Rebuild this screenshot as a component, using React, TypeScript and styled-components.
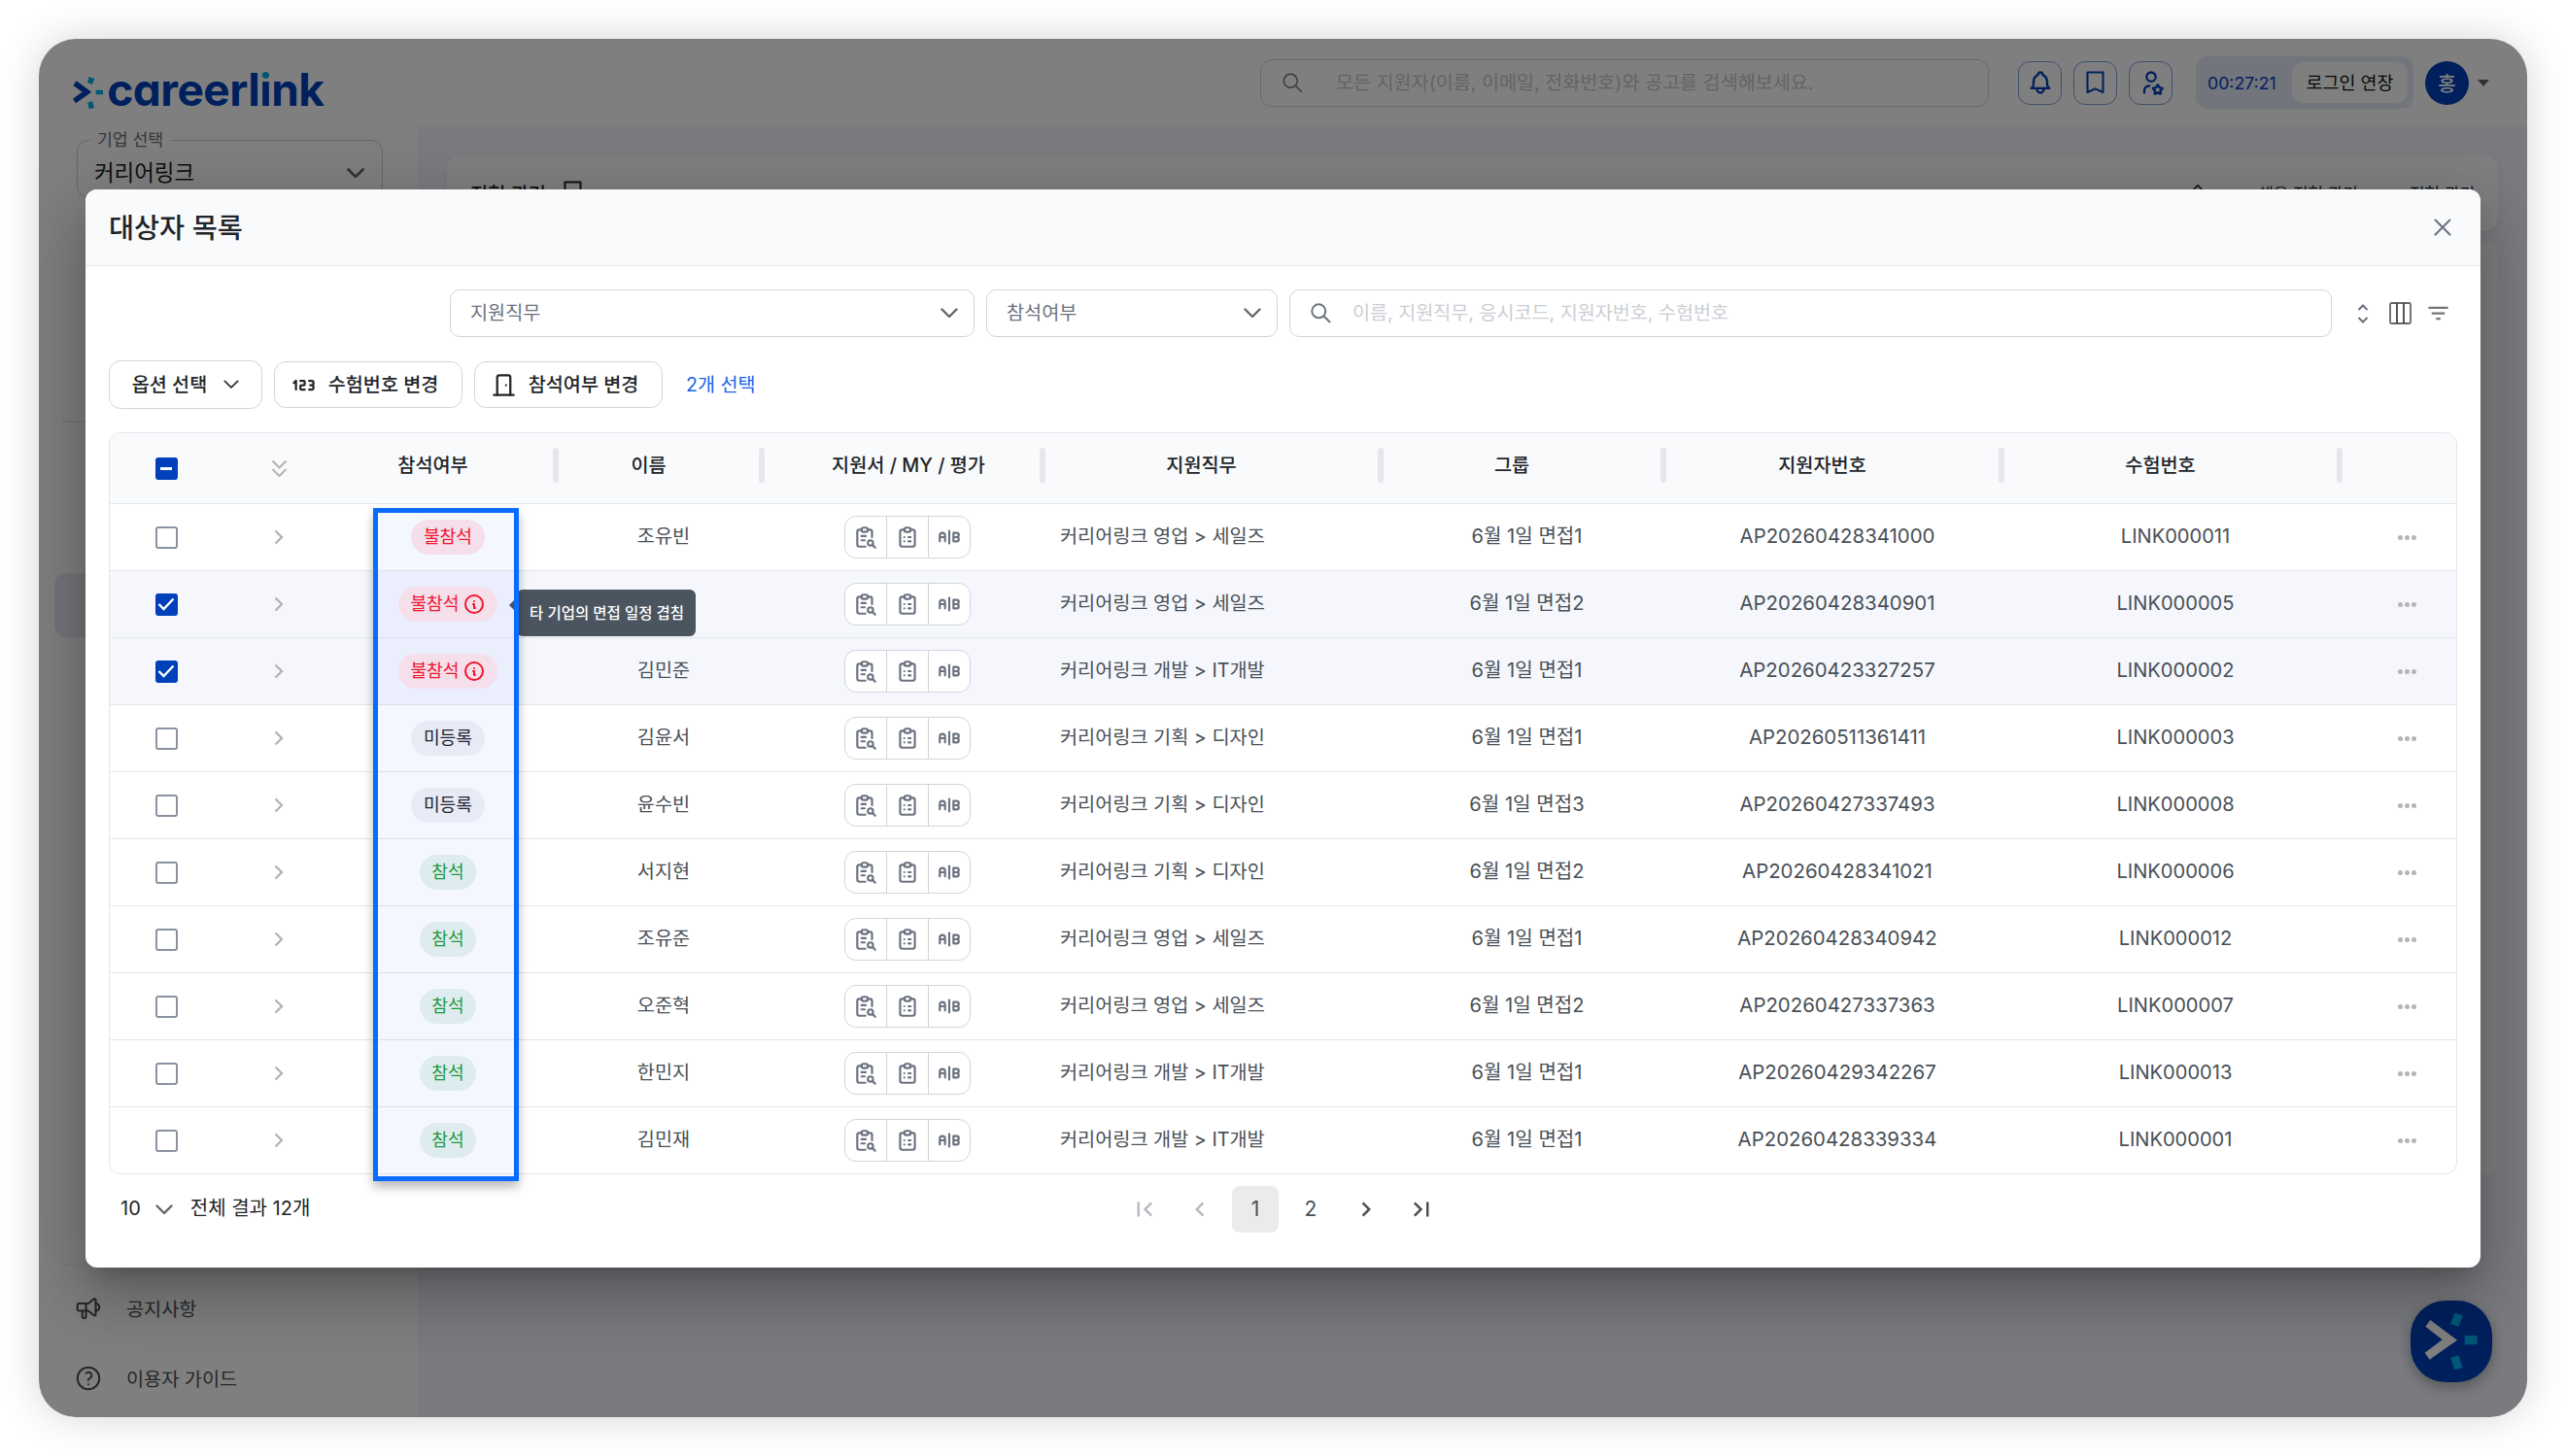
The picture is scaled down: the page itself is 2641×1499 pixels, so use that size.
import React from "react";
import styled, { createGlobalStyle, css } from "styled-components";
import {
  TbAB,
  TbBell,
  TbClipboardList,
  TbDoor,
  TbHelp,
  TbInfoCircle,
  TbNumber123,
  TbReportSearch,
  TbSpeakerphone,
  TbUserStar,
} from "react-icons/tb";
import { MdChevronLeft, MdChevronRight, MdFilterList, MdFirstPage, MdLastPage } from "react-icons/md";

const GlobalStyle = createGlobalStyle`
  * { box-sizing: border-box; }
  body {
    margin: 0;
    background: #fff;
    font-family: Inter, "Noto Sans CJK KR", sans-serif;
    color: #212529;
  }
`;

const navy = "#0040bb";
const line = "#e3e6ea";
const outline = "#d1d5db";

/* ---------- application behind the dialog ---------- */

const Page = styled.div`
  width: 2641px;
  height: 1499px;
  padding: 40px;
`;

const Shell = styled.div`
  position: relative;
  display: flex;
  flex-direction: column;
  height: 1419px;
  border-radius: 38px;
  background: #fff;
  overflow: hidden;
`;

const ShellShadow = styled.div`
  border-radius: 38px;
  box-shadow: 0 0 42px rgba(0, 0, 0, 0.17);
`;

const Header = styled.header`
  display: flex;
  align-items: center;
  height: 90px;
  flex: none;
  padding: 0 39px 0 35px;
`;

const Logo = styled.div`
  display: flex;
  align-items: center;
  height: 44px;
  margin-top: 14px;

  svg {
    margin-top: 8px;
  }
`;

const Wordmark = styled.span`
  margin-left: 4px;
  font-family: Inter, sans-serif;
  font-weight: 730;
  font-size: 46px;
  line-height: 44px;
  letter-spacing: -0.5px;
  font-feature-settings: "cv11";
  color: ${navy};
`;

const LogoI = styled.span`
  background: linear-gradient(#00aeef 0 35%, ${navy} 35%);
  background-clip: text;
  -webkit-background-clip: text;
  color: transparent;
`;

const GlobalSearch = styled.div`
  display: flex;
  align-items: center;
  gap: 34px;
  width: 750px;
  height: 49px;
  margin-left: auto;
  padding-left: 22px;
  border: 1.5px solid ${outline};
  border-radius: 12px;
  color: #6b7280;
`;

const Hint = styled.span<{ $size: number; $color?: string }>`
  font-size: ${(p) => p.$size}px;
  line-height: 28px;
  color: ${(p) => p.$color ?? "#c4c8cf"};
  white-space: pre;
`;

const IconButtons = styled.div`
  display: flex;
  gap: 12px;
  margin-left: 30px;
`;

const IconButton = styled.div`
  display: flex;
  align-items: center;
  justify-content: center;
  width: 45px;
  height: 45px;
  border: 1.5px solid #7f9fdd;
  border-radius: 12px;
  color: ${navy};
`;

const Session = styled.div`
  display: flex;
  align-items: center;
  justify-content: space-between;
  width: 224px;
  height: 54px;
  margin-left: 24px;
  padding: 0 6px 0 12px;
  border-radius: 12px;
  background: #e6ebf9;
  font-size: 17.7px;
  color: ${navy};
`;

const Extend = styled.div`
  display: flex;
  align-items: center;
  justify-content: center;
  width: 119px;
  height: 42px;
  padding-bottom: 2px;
  border-radius: 12px;
  background: #fff;
  font-size: 18.4px;
  color: #111;
`;

const Avatar = styled.div`
  display: flex;
  align-items: center;
  justify-content: center;
  width: 45px;
  height: 45px;
  margin-left: 12px;
  border-radius: 50%;
  background: ${navy};
  color: #fff;
  font-size: 20px;
  font-weight: 500;
`;

const Caret = styled.div`
  margin-left: 9px;
  border: 6px solid transparent;
  border-top: 7px solid #666;
  border-bottom: 0;
`;

const Body = styled.div`
  display: flex;
  flex: 1;
`;

const Sidebar = styled.aside`
  display: flex;
  flex-direction: column;
  width: 390px;
`;

const CompanySelect = styled.fieldset`
  display: flex;
  align-items: center;
  justify-content: space-between;
  width: 315px;
  height: 70px;
  margin: 4px 0 0 39px;
  padding: 4px 18px 0 17px;
  border: 1.5px solid #c9ccd2;
  border-radius: 12px;
  font-size: 22.4px;
  line-height: 34px;
  color: #212121;

  legend {
    margin-left: -5px;
    padding: 0 8px;
    font-size: 17.2px;
    line-height: 20px;
    color: #6b7280;
  }

  span {
    padding-top: 3px;
  }

  svg {
    margin-top: 3px;
  }
`;

const MenuDivider = styled.div<{ $top: number }>`
  height: 1.5px;
  margin: ${(p) => p.$top}px 24px 0;
  background: #e9eaee;
`;

const ActiveMenu = styled.div`
  height: 66px;
  margin: 155px 16px 0;
  border-radius: 12px;
  background: #e6ebf5;
`;

const MenuItem = styled.div<{ $top: number }>`
  display: flex;
  align-items: center;
  gap: 24px;
  height: 32px;
  margin-top: ${(p) => p.$top}px;
  padding-left: 36px;
  padding-bottom: 1px;
  font-size: 19.7px;
  color: #495057;
`;

const Content = styled.main`
  flex: 1;
  padding: 30px;
  background: #f3f6fe;
`;

const TitleCard = styled.div`
  display: flex;
  justify-content: space-between;
  height: 78px;
  padding: 26px 24px 0;
  border-radius: 14px;
  background: #fff;
  box-shadow: 0 3px 10px rgba(20, 40, 100, 0.05);
  font-size: 19.8px;
  line-height: 28px;
  font-weight: 500;
`;

const Crumbs = styled.div`
  display: flex;
  gap: 21px;
  font-size: 16.9px;
  font-weight: 400;
`;

const Inline = styled.div`
  display: flex;
  gap: 18px;
`;

const PanelCard = styled.div`
  height: 959px;
  margin-top: 12px;
  border-radius: 14px;
  background: #fff;
`;

const ChatButton = styled.div`
  position: absolute;
  right: 36px;
  bottom: 36px;
  width: 84px;
  height: 84px;
  border-radius: 36px;
  background: ${navy};
  box-shadow: 0 5px 14px rgba(0, 0, 0, 0.3);
`;

const Overlay = styled.div`
  position: absolute;
  inset: 0;
  display: flex;
  justify-content: center;
  align-items: flex-start;
  padding-top: 155px;
  background: rgba(0, 0, 0, 0.5);
`;

/* ---------- dialog ---------- */

const Dialog = styled.section`
  width: 2465px;
  height: 1110px;
  border-radius: 12px;
  background: #fff;
  box-shadow:
    0 16px 22px -10px rgba(0, 0, 0, 0.2),
    0 36px 57px 4px rgba(0, 0, 0, 0.14),
    0 14px 69px 12px rgba(0, 0, 0, 0.12);
`;

const DialogHead = styled.div`
  display: flex;
  align-items: center;
  justify-content: space-between;
  height: 79px;
  padding: 0 30px 0 24px;
  border-bottom: 1px solid ${line};
  border-radius: 12px 12px 0 0;
  background: #f9fafc;
  color: #6b7280;
`;

const DialogTitle = styled.h2`
  margin: 2px 0 0;
  font-size: 28.3px;
  line-height: 40px;
  font-weight: 450;
  color: #212529;
`;

const Filters = styled.div`
  display: flex;
  align-items: center;
  padding: 24px 29px 0 375px;
`;

const Select = styled.div<{ $w: number }>`
  display: flex;
  align-items: center;
  justify-content: space-between;
  width: ${(p) => p.$w}px;
  height: 49px;
  margin-right: 12px;
  padding: 0 16px 0 20px;
  border: 1.5px solid ${outline};
  border-radius: 10px;
  font-size: 19.7px;
  line-height: 28px;
  color: #6b7280;

  span {
    padding-bottom: 2px;
  }
`;

const SearchBox = styled.div`
  display: flex;
  align-items: center;
  gap: 22px;
  flex: 1;
  height: 49px;
  padding-left: 21px;
  border: 1.5px solid ${outline};
  border-radius: 10px;
  color: #6b7280;

  span {
    padding-bottom: 2px;
  }
`;

const Tools = styled.div`
  display: flex;
  align-items: center;
  justify-content: space-between;
  width: 97px;
  margin-left: 26px;
  margin-right: 1px;
  color: #6b7280;

  svg:nth-child(2) {
    margin-left: 7px;
  }
`;

const Actions = styled.div`
  display: flex;
  align-items: center;
  gap: 12px;
  padding: 24px 24px 0;
`;

const ActionButton = styled.div<{ $w: number; $h?: number; $gap?: number; $trail?: number }>`
  display: flex;
  align-items: center;
  justify-content: center;
  gap: ${(p) => p.$gap ?? 12}px;
  width: ${(p) => p.$w}px;
  height: ${(p) => p.$h ?? 48}px;
  padding-right: ${(p) => p.$trail ?? 0}px;
  border: 1.5px solid ${outline};
  border-radius: 12px;
  font-size: 19.6px;
  line-height: 28px;
  font-weight: 450;
`;

const Picked = styled.span`
  margin-left: 12px;
  padding-bottom: 3px;
  font-size: 19.6px;
  color: #1763e6;
`;

/* ---------- table ---------- */

const Table = styled.div`
  position: relative;
  margin: 24px 24px 0;
  border: 1px solid ${line};
  border-radius: 12px;
`;

const columns = css`
  display: grid;
  grid-template-columns: 116px 116px 232px 212px 289px 348px 291px 348px 348px 1fr;
  align-items: center;
`;

const HeadRow = styled.div`
  ${columns}
  height: 73px;
  border-bottom: 1px solid ${line};
  border-radius: 12px 12px 0 0;
  background: #f9fafc;
`;

const Row = styled.div<{ $selected?: boolean }>`
  ${columns}
  height: 69px;
  border-bottom: 1px solid ${line};
  background: ${(p) => (p.$selected ? "#f5f7fd" : "transparent")};

  &:last-of-type {
    height: 68px;
    border-bottom: 0;
  }
`;

const HeadCell = styled.div<{ $inset?: number }>`
  display: flex;
  align-items: center;
  padding-left: ${(p) => p.$inset ?? 0}px;
  height: 64px;
  padding-bottom: 7px;
  font-size: 19.7px;
  line-height: 28px;
  font-weight: 450;

  span {
    flex: 1;
    text-align: center;
    margin-right: 23px;
  }

  &::after {
    content: "";
    width: 6px;
    height: 36px;
    margin-right: 2px;
    border-radius: 3px;
    background: #e5e7eb;
  }
`;

const Cell = styled.div<{ $align?: string; $size?: number }>`
  display: flex;
  align-items: center;
  justify-content: ${(p) => p.$align ?? "center"};
  padding-left: ${(p) => (p.$align ? 13 : 0)}px;
  padding-bottom: 2px;
  font-size: ${(p) => p.$size ?? 19.7}px;
  line-height: 28px;
  color: #495057;
  white-space: pre;
`;

const IconCell = styled.div<{ $nudge?: number }>`
  display: flex;
  align-items: center;
  justify-content: center;
  padding-left: ${(p) => p.$nudge ?? 0}px;
  color: #b3b6bb;
`;

const Check = styled.div<{ $on?: boolean }>`
  display: flex;
  align-items: center;
  justify-content: center;
  width: 23px;
  height: 23px;
  border: 2.5px solid ${(p) => (p.$on ? navy : "#8b929f")};
  border-radius: 3px;
  background: ${(p) => (p.$on ? navy : "#fff")};

  svg {
    flex: none;
  }
`;

type Status = "absent" | "none" | "present";

const pillColors: Record<Status, [string, string]> = {
  absent: ["#ffe6ea", "#fa1428"],
  none: ["#f2f2f6", "#212529"],
  present: ["#e9f4ef", "#1f9d38"],
};

const Pill = styled.div<{ $status: Status }>`
  display: flex;
  align-items: center;
  gap: 4px;
  height: 36px;
  padding: 0 12.5px 2px;
  border-radius: 18px;
  font-size: 18.2px;
  line-height: 26px;
  background: ${(p) => pillColors[p.$status][0]};
  color: ${(p) => pillColors[p.$status][1]};

  svg {
    margin: 2px 0 0 -1px;
  }
`;

const DocGroup = styled.div`
  display: flex;
  width: 130px;
  height: 44px;
  border: 1.5px solid ${outline};
  border-radius: 12px;
  background: #fff;
  color: #6b7280;
`;

const DocButton = styled.div`
  display: flex;
  align-items: center;
  justify-content: center;
  flex: 1;

  & + & {
    border-left: 1px solid ${outline};
  }
`;

const Dots = styled.div`
  display: flex;
  gap: 2px;

  i {
    width: 5px;
    height: 5px;
    border-radius: 50%;
    background: #b5b5b8;
  }
`;

const Tooltip = styled.aside`
  position: absolute;
  left: 419px;
  top: 161px;
  display: flex;
  align-items: center;
  height: 48px;
  padding: 1px 12px 0 13px;
  border-radius: 6px;
  background: #4b5560;
  color: #fff;
  font-size: 15.5px;
  line-height: 22px;
  font-weight: 500;
  white-space: pre;

  &::before {
    content: "";
    position: absolute;
    left: -8px;
    top: 7px;
    border: 9px solid transparent;
    border-right: 9px solid #4b5560;
    border-left: 0;
  }
`;

const Highlight = styled.aside`
  position: absolute;
  left: 271px;
  top: 77px;
  width: 150px;
  height: 693px;
  border: 5px solid #0a6cff;
  background: rgba(10, 60, 255, 0.04);
  box-shadow: 0 6px 10px rgba(0, 0, 0, 0.28);
`;

const Footer = styled.div`
  display: grid;
  grid-template-columns: 1fr auto 1fr;
  align-items: center;
  padding: 12px 24px 0;
`;

const PageSize = styled.div`
  display: flex;
  align-items: center;
  padding: 0 0 2px 12px;
  font-size: 20px;
  line-height: 28px;
  white-space: pre;

  svg {
    margin: 3px 18px 0 15px;
  }
`;

const Pager = styled.div`
  display: flex;
  gap: 9px;
`;

const PagerButton = styled.div<{ $active?: boolean; $off?: boolean }>`
  display: flex;
  align-items: center;
  justify-content: center;
  width: 48px;
  height: 48px;
  padding-bottom: ${(p) => (p.$active === undefined ? 0 : 2)}px;
  border-radius: 8px;
  background: ${(p) => (p.$active ? "#ebebeb" : "transparent")};
  color: ${(p) => (p.$off ? "#b6bac0" : "#495057")};
  font-size: 21px;
`;

/* ---------- icons ---------- */

const Chevron = ({ w = 18, stroke = 2.4, color = "#666" }: { w?: number; stroke?: number; color?: string }) => (
  <svg width={w} height={w * 0.6} viewBox="0 0 18 10.8" fill="none" stroke={color} strokeWidth={stroke} strokeLinecap="round" strokeLinejoin="round">
    <path d="M1.5 1.5 9 9l7.5-7.5" />
  </svg>
);

const ChevronSide = () => (
  <svg width="10" height="16" viewBox="0 0 10 16" fill="none" stroke="#b3b3b6" strokeWidth="2.3">
    <path d="m1.5 1.5 6.5 6.5-6.5 6.5" />
  </svg>
);

const ChevronDouble = () => (
  <svg width="17" height="19" viewBox="0 0 17 19" fill="none" stroke="#b3b3b6" strokeWidth="2">
    <path d="m1.5 1.5 7 7 7-7M1.5 10l7 7 7-7" />
  </svg>
);

const Magnifier = ({ stroke = 1.8 }: { stroke?: number }) => (
  <svg width="21" height="21" viewBox="0 0 21 21" fill="none" stroke="currentColor" strokeWidth={stroke}>
    <circle cx="8.3" cy="8.3" r="7" />
    <path d="m13.3 13.3 6.7 6.7" />
  </svg>
);

const Bookmark = () => (
  <svg width="19" height="24" viewBox="0 0 19 24" fill="none" stroke="currentColor" strokeWidth="2.1">
    <path d="M1.5 1.5h16v20.5l-8-3.6-8 3.6z" strokeLinejoin="round" />
  </svg>
);

const Close = () => (
  <svg width="18" height="18" viewBox="0 0 18 18" fill="none" stroke="currentColor" strokeWidth="2.1" strokeLinecap="round">
    <path d="m1.5 1.5 15 15m0-15-15 15" />
  </svg>
);

const SortIcon = () => (
  <svg width="12" height="20" viewBox="0 0 12 20" fill="none" stroke="currentColor" strokeWidth="2.1">
    <path d="M1.5 6 6 1.5 10.5 6M1.5 14 6 18.5 10.5 14" />
  </svg>
);

const ColumnsIcon = () => (
  <svg width="23" height="23" viewBox="0 0 23 23" fill="none" stroke="#666" strokeWidth="1.8">
    <rect x="1" y="1" width="21" height="21" rx="1.5" />
    <path d="M8 1v21M15 1v21" stroke="#444" />
  </svg>
);

const CheckMark = () => (
  <svg width="18" height="14" viewBox="0 0 18 14" fill="none" stroke="#fff" strokeWidth="2.4">
    <path d="m1.5 7 5 5L16.5 1.5" />
  </svg>
);

const HomeIcon = () => (
  <svg width="18" height="26" viewBox="0 0 20 26" fill="none" stroke="#333" strokeWidth="2">
    <path d="M2 12l8-8 8 8v9H2z" strokeLinejoin="round" />
  </svg>
);

const markShapes = {
  small: {
    box: "45 88 94 102",
    arrow: "56,101 103,135 54,170 45,156 74,135 46,115",
    rays: ["95,88 112,94 105,112 90,106", "116,129 138,129 138,143 116,143", "90,168 105,163 111,184 96,188"],
  },
  large: {
    box: "544 477 252 252",
    arrow: "605,537 688,599 603,659 588,638 642,598 590,557",
    rays: ["680,515 706,523 692,558 667,549", "711,585 750,585 750,613 711,613", "667,654 692,646 705,684 680,691"],
  },
};

const Mark = ({ kind, w, h, color }: { kind: "small" | "large"; w: number; h: number; color: string }) => (
  <svg width={w} height={h} viewBox={markShapes[kind].box}>
    <polygon points={markShapes[kind].arrow} fill={color} />
    {markShapes[kind].rays.map((r) => (
      <polygon key={r} points={r} fill="#00aeef" />
    ))}
  </svg>
);

/* ---------- data ---------- */

type Applicant = {
  status: Status;
  note?: boolean;
  checked?: boolean;
  name: string;
  job: string;
  group: string;
  applicant: string;
  exam: string;
};

const rows: Applicant[] = [
  { status: "absent", name: "조유빈", job: "영업 > 세일즈", group: "면접1", applicant: "AP20260428341000", exam: "LINK000011" },
  { status: "absent", note: true, checked: true, name: "", job: "영업 > 세일즈", group: "면접2", applicant: "AP20260428340901", exam: "LINK000005" },
  { status: "absent", note: true, checked: true, name: "김민준", job: "개발 > IT개발", group: "면접1", applicant: "AP20260423327257", exam: "LINK000002" },
  { status: "none", name: "김윤서", job: "기획 > 디자인", group: "면접1", applicant: "AP20260511361411", exam: "LINK000003" },
  { status: "none", name: "윤수빈", job: "기획 > 디자인", group: "면접3", applicant: "AP20260427337493", exam: "LINK000008" },
  { status: "present", name: "서지현", job: "기획 > 디자인", group: "면접2", applicant: "AP20260428341021", exam: "LINK000006" },
  { status: "present", name: "조유준", job: "영업 > 세일즈", group: "면접1", applicant: "AP20260428340942", exam: "LINK000012" },
  { status: "present", name: "오준혁", job: "영업 > 세일즈", group: "면접2", applicant: "AP20260427337363", exam: "LINK000007" },
  { status: "present", name: "한민지", job: "개발 > IT개발", group: "면접1", applicant: "AP20260429342267", exam: "LINK000013" },
  { status: "present", name: "김민재", job: "개발 > IT개발", group: "면접1", applicant: "AP20260428339334", exam: "LINK000001" },
];

const statusLabel: Record<Status, string> = { absent: "불참석", none: "미등록", present: "참석" };

const ApplicantRow = ({ a }: { a: Applicant }) => (
  <Row $selected={a.checked}>
    <IconCell>
      <Check $on={a.checked}>{a.checked && <CheckMark />}</Check>
    </IconCell>
    <IconCell>
      <ChevronSide />
    </IconCell>
    <IconCell>
      <Pill $status={a.status}>
        {statusLabel[a.status]}
        {a.note && <TbInfoCircle size={24} />}
      </Pill>
    </IconCell>
    <Cell>{a.name}</Cell>
    <IconCell $nudge={1}>
      <DocGroup>
        <DocButton>
          <TbReportSearch size={26} />
        </DocButton>
        <DocButton>
          <TbClipboardList size={26} />
        </DocButton>
        <DocButton>
          <TbAB size={26} />
        </DocButton>
      </DocGroup>
    </IconCell>
    <Cell $align="flex-start">{`커리어링크 ${a.job}`}</Cell>
    <Cell $size={20.1}>{`6월 1일 ${a.group}`}</Cell>
    <Cell $size={20.4}>{a.applicant}</Cell>
    <Cell $size={20.1}>{a.exam}</Cell>
    <IconCell $nudge={14}>
      <Dots>
        <i />
        <i />
        <i />
      </Dots>
    </IconCell>
  </Row>
);

export default function App() {
  return (
    <Page>
      <GlobalStyle />
      <ShellShadow>
        <Shell>
          <Header>
            <Logo>
              <Mark kind="small" w={31.3} h={34} color={navy} />
              <Wordmark>
                careerl<LogoI>i</LogoI>nk
              </Wordmark>
            </Logo>
            <GlobalSearch>
              <Magnifier stroke={1.5} />
              <Hint $size={19.6}>모든 지원자(이름, 이메일, 전화번호)와 공고를 검색해보세요.</Hint>
            </GlobalSearch>
            <IconButtons>
              <IconButton>
                <TbBell size={28} />
              </IconButton>
              <IconButton>
                <Bookmark />
              </IconButton>
              <IconButton>
                <TbUserStar size={28} />
              </IconButton>
            </IconButtons>
            <Session>
              00:27:21
              <Extend>로그인 연장</Extend>
            </Session>
            <Avatar>홍</Avatar>
            <Caret />
          </Header>
          <Body>
            <Sidebar>
              <CompanySelect>
                <legend>기업 선택</legend>
                <span>커리어링크</span>
                <Chevron w={18} stroke={2.6} />
              </CompanySelect>
              <MenuDivider $top={229} />
              <ActiveMenu />
              <MenuDivider $top={646} />
              <MenuItem $top={28}>
                <TbSpeakerphone size={30} strokeWidth={1.7} />
                공지사항
              </MenuItem>
              <MenuItem $top={40}>
                <TbHelp size={30} strokeWidth={1.6} />
                이용자 가이드
              </MenuItem>
            </Sidebar>
            <Content>
              <TitleCard>
                <Inline>
                  전형 관리
                  <Bookmark />
                </Inline>
                <Crumbs>
                  <HomeIcon />
                  <span>&gt;</span>
                  <span>채용 전형 관리</span>
                  <span>&gt;</span>
                  <span>전형 관리</span>
                </Crumbs>
              </TitleCard>
              <PanelCard />
            </Content>
          </Body>
          <ChatButton>
            <Mark kind="large" w={84} h={84} color="#fff" />
          </ChatButton>
          <Overlay>
            <Dialog>
              <DialogHead>
                <DialogTitle>대상자 목록</DialogTitle>
                <Close />
              </DialogHead>
              <Filters>
                <Select $w={540}>
                  <span>지원직무</span>
                  <Chevron />
                </Select>
                <Select $w={300}>
                  <span>참석여부</span>
                  <Chevron />
                </Select>
                <SearchBox>
                  <Magnifier stroke={2} />
                  <Hint $size={19.6} $color="#cbced4">이름, 지원직무, 응시코드, 지원자번호, 수험번호</Hint>
                </SearchBox>
                <Tools>
                  <SortIcon />
                  <ColumnsIcon />
                  <MdFilterList size={27} color="#757575" />
                </Tools>
              </Filters>
              <Actions>
                <ActionButton $w={158} $h={50} $gap={17}>
                  옵션 선택
                  <Chevron w={16} stroke={2} color="#333" />
                </ActionButton>
                <ActionButton $w={194} $trail={8}>
                  <TbNumber123 size={27} />
                  수험번호 변경
                </ActionButton>
                <ActionButton $w={194} $trail={8}>
                  <TbDoor size={27} />
                  참석여부 변경
                </ActionButton>
                <Picked>2개 선택</Picked>
              </Actions>
              <Table>
                <HeadRow>
                  <IconCell>
                    <Check $on>
                      <svg width="12" height="3" viewBox="0 0 12 3">
                        <rect width="12" height="3" fill="#fff" />
                      </svg>
                    </Check>
                  </IconCell>
                  <IconCell>
                    <ChevronDouble />
                  </IconCell>
                  <HeadCell>
                    <span>참석여부</span>
                  </HeadCell>
                  <HeadCell>
                    <span>이름</span>
                  </HeadCell>
                  <HeadCell $inset={34}>
                    <span>지원서 / MY / 평가</span>
                  </HeadCell>
                  <HeadCell>
                    <span>지원직무</span>
                  </HeadCell>
                  <HeadCell>
                    <span>그룹</span>
                  </HeadCell>
                  <HeadCell>
                    <span>지원자번호</span>
                  </HeadCell>
                  <HeadCell>
                    <span>수험번호</span>
                  </HeadCell>
                </HeadRow>
                {rows.map((a) => (
                  <ApplicantRow key={a.exam} a={a} />
                ))}
                <Tooltip>타 기업의 면접 일정 겹침</Tooltip>
                <Highlight />
              </Table>
              <Footer>
                <PageSize>
                  10
                  <Chevron />
                  전체 결과 12개
                </PageSize>
                <Pager>
                  <PagerButton $off>
                    <MdFirstPage size={30} />
                  </PagerButton>
                  <PagerButton $off>
                    <MdChevronLeft size={30} />
                  </PagerButton>
                  <PagerButton $active>1</PagerButton>
                  <PagerButton $active={false}>2</PagerButton>
                  <PagerButton>
                    <MdChevronRight size={30} />
                  </PagerButton>
                  <PagerButton>
                    <MdLastPage size={30} />
                  </PagerButton>
                </Pager>
              </Footer>
            </Dialog>
          </Overlay>
        </Shell>
      </ShellShadow>
    </Page>
  );
}
